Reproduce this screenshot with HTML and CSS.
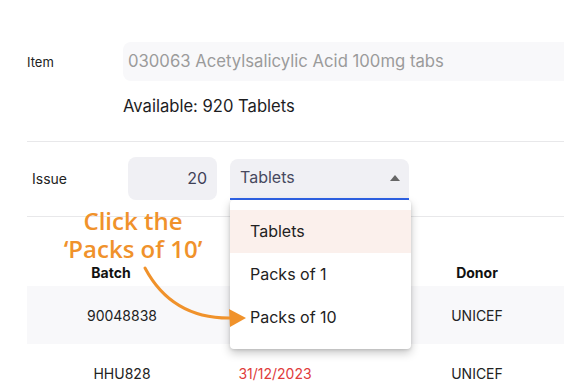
FILE: index.html
```html
<!DOCTYPE html>
<html lang="en">
<head>
    <meta charset="UTF-8">
    <meta name="viewport" content="width=device-width, initial-scale=1.0">
    <title>Issue stock</title>
    <link rel="stylesheet" href="styles.css">
</head>
<body>
    <div class="page">
        <div class="form-row item-row">
            <label class="row-label item-label">Item</label>
            <div class="item-input">030063 Acetylsalicylic Acid 100mg tabs</div>
        </div>
        <div class="available">Available: 920 Tablets</div>

        <div class="form-row issue-row">
            <label class="row-label issue-label">Issue</label>
            <div class="qty-input">20</div>
            <div class="select-wrap">
                <div class="select-box">
                    <span>Tablets</span>
                    <span class="caret"></span>
                </div>
                <ul class="select-menu">
                    <li class="active">Tablets</li>
                    <li>Packs of 1</li>
                    <li>Packs of 10</li>
                </ul>
            </div>
        </div>

        <div class="batch-table">
            <div class="table-head">
                <div class="cell batch-head">Batch</div>
                <div class="cell"></div>
                <div class="cell">Donor</div>
            </div>
            <div class="table-row striped">
                <div class="cell">90048838</div>
                <div class="cell"></div>
                <div class="cell">UNICEF</div>
            </div>
            <div class="table-row">
                <div class="cell">HHU828</div>
                <div class="cell expired">31/12/2023</div>
                <div class="cell">UNICEF</div>
            </div>
        </div>

        <!-- tutorial hint -->
        <div class="hint">Click the<br>‘Packs of 10’</div>
        <svg class="hint-arrow" width="564" height="382" viewBox="0 0 564 382">
            <path d="M145 268 C 162 300, 190 319, 232 318" fill="none" stroke="#f0922b" stroke-width="3" stroke-linecap="round"/>
            <polygon points="246,318 229,309 230,327" fill="#f0922b"/>
        </svg>
    </div>
</body>
</html>
```

FILE: styles.css
```css
body {
    margin: 0;
    font-family: Inter, "Noto Sans", sans-serif;
    color: #1d1d1f;
    background: #fff;
    overflow: hidden;
}
.page {
    position: relative;
    width: 564px;
    height: 382px;
    overflow: hidden;
    padding: 42px 0 0 27px;
    box-sizing: border-box;
}
.form-row {
    display: flex;
    align-items: center;
}
.row-label {
    width: 96px;
    flex-shrink: 0;
    font-size: 14px;
    color: #222;
}
.item-label {
    font-size: 13px;
}
.item-input {
    width: 520px;
    flex-shrink: 0;
    height: 39px;
    line-height: 39px;
    padding-left: 5px;
    background: #f8f8fa;
    border-radius: 8px;
    color: #9b9b9b;
    font-size: 16.7px;
}
.available {
    margin: 15px 0 0 96px;
    font-size: 16.6px;
    line-height: 20px;
    color: #1d1d1f;
}
.issue-row {
    margin-top: 25px;
    border-top: 1px solid #e8e8ea;
    padding: 15px 0 16px;
    border-bottom: 1px solid #e8e8ea;
}
.issue-label {
    width: 96px;
    padding-left: 5px;
    box-sizing: border-box;
    margin-right: 5px;
}
.qty-input {
    width: 89px;
    height: 43px;
    line-height: 43px;
    box-sizing: border-box;
    padding-right: 10px;
    text-align: right;
    background: #f0f0f4;
    border-radius: 8px;
    font-size: 16px;
    color: #3f4157;
}
.select-wrap {
    position: relative;
    margin-left: 13px;
    margin-top: 1px;
}
.select-box {
    width: 179px;
    height: 41px;
    box-sizing: border-box;
    padding: 0 9px 2px 10px;
    display: flex;
    align-items: center;
    justify-content: space-between;
    background: #f0f0f4;
    border-radius: 8px 8px 0 0;
    border-bottom: 2px solid #2f63e8;
    font-size: 16px;
    color: #47495f;
}
.caret {
    width: 0;
    height: 0;
    border-left: 5.5px solid transparent;
    border-right: 5.5px solid transparent;
    border-bottom: 6px solid #666;
    margin-top: 2px;
}
.select-menu {
    position: absolute;
    top: 41px;
    left: 0;
    z-index: 3;
    width: 181px;
    margin: 0;
    padding: 10px 0;
    list-style: none;
    background: #fff;
    border-radius: 4px;
    box-shadow: 0 4px 10px rgba(0, 0, 0, 0.22), 0 1px 3px rgba(0, 0, 0, 0.12);
}
.select-menu li {
    height: 43px;
    line-height: 43px;
    padding-left: 20px;
    font-size: 16px;
    color: #222;
}
.select-menu li.active {
    background: #fbf0ec;
}
.batch-table {
    margin-top: 41px;
}
.table-head,
.table-row {
    display: grid;
    grid-template-columns: 190px 116px 288px;
    align-items: center;
}
.table-head {
    height: 28px;
    font-size: 14px;
    font-weight: 700;
    color: #111;
}
.table-row {
    height: 58px;
    font-size: 14px;
    color: #222;
}
.striped {
    background: #f8f8fa;
}
.cell {
    text-align: center;
}
.batch-head {
    padding-right: 22px;
}
.expired {
    color: #e03b3b;
}
.hint {
    position: absolute;
    left: 33px;
    top: 207px;
    width: 200px;
    z-index: 4;
    text-align: center;
    font-family: "Open Sans", sans-serif;
    font-weight: 600;
    font-size: 24px;
    line-height: 28px;
    color: #f0922b;
}
.hint-arrow {
    position: absolute;
    left: 0;
    top: 0;
    z-index: 4;
}
```
